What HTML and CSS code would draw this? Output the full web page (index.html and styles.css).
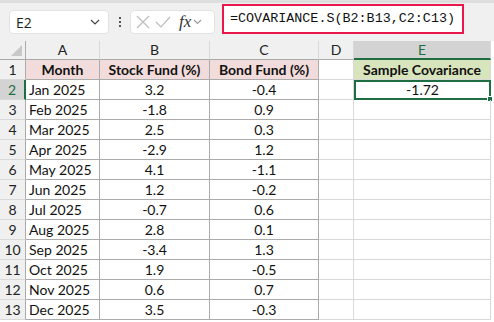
FILE: index.html
```html
<!DOCTYPE html>
<html lang="en">
<head>
  <meta charset="UTF-8">
  <title>Sample Covariance</title>
  <link rel="stylesheet" href="styles.css">
</head>
<body>
<!-- Formula bar -->
<div class="toolbar">
  <div class="namebox">
    <span>E2</span>
    <svg width="10" height="6" viewBox="0 0 10 6"><path d="M1 1l4 4 4-4" fill="none" stroke="#444" stroke-width="1.2"/></svg>
  </div>
  <div class="dots"><i></i><i></i><i></i></div>
  <div class="fxbox">
    <svg width="14" height="14" viewBox="0 0 14 14"><path d="M1 1l12 12M13 1L1 13" stroke="#bdbdbd" stroke-width="1.2"/></svg>
    <svg width="16" height="14" viewBox="0 0 16 14"><path d="M1 7l5 5L15 2" fill="none" stroke="#bdbdbd" stroke-width="1.2"/></svg>
    <span class="fx">fx</span>
    <svg width="9" height="6" viewBox="0 0 9 6"><path d="M1 1l3.5 3.5L8 1" fill="none" stroke="#999" stroke-width="1.1"/></svg>
  </div>
  <div class="formula">=COVARIANCE.S(B2:B13,C2:C13)</div>
</div>

<!-- Sheet -->
<div class="sheet">
  <div class="hd corner"><span class="tri"></span></div>
  <div class="hd">A</div>
  <div class="hd">B</div>
  <div class="hd">C</div>
  <div class="hd">D</div>
  <div class="hd sel-col">E</div>

  <div class="rh">1</div>
  <div class="c t head">Month</div>
  <div class="c t head">Stock Fund (%)</div>
  <div class="c t head">Bond Fund (%)</div>
  <div class="c"></div>
  <div class="c green">Sample Covariance</div>

  <div class="rh sel-row">2</div>
  <div class="c t l">Jan 2025</div>
  <div class="c t">3.2</div>
  <div class="c t">-0.4</div>
  <div class="c"></div>
  <div class="c active">-1.72<span class="handle"></span></div>

  <div class="rh">3</div><div class="c t l">Feb 2025</div><div class="c t">-1.8</div><div class="c t">0.9</div><div class="c"></div><div class="c"></div>
  <div class="rh">4</div><div class="c t l">Mar 2025</div><div class="c t">2.5</div><div class="c t">0.3</div><div class="c"></div><div class="c"></div>
  <div class="rh">5</div><div class="c t l">Apr 2025</div><div class="c t">-2.9</div><div class="c t">1.2</div><div class="c"></div><div class="c"></div>
  <div class="rh">6</div><div class="c t l">May 2025</div><div class="c t">4.1</div><div class="c t">-1.1</div><div class="c"></div><div class="c"></div>
  <div class="rh">7</div><div class="c t l">Jun 2025</div><div class="c t">1.2</div><div class="c t">-0.2</div><div class="c"></div><div class="c"></div>
  <div class="rh">8</div><div class="c t l">Jul 2025</div><div class="c t">-0.7</div><div class="c t">0.6</div><div class="c"></div><div class="c"></div>
  <div class="rh">9</div><div class="c t l">Aug 2025</div><div class="c t">2.8</div><div class="c t">0.1</div><div class="c"></div><div class="c"></div>
  <div class="rh">10</div><div class="c t l">Sep 2025</div><div class="c t">-3.4</div><div class="c t">1.3</div><div class="c"></div><div class="c"></div>
  <div class="rh">11</div><div class="c t l">Oct 2025</div><div class="c t">1.9</div><div class="c t">-0.5</div><div class="c"></div><div class="c"></div>
  <div class="rh">12</div><div class="c t l">Nov 2025</div><div class="c t">0.6</div><div class="c t">0.7</div><div class="c"></div><div class="c"></div>
  <div class="rh">13</div><div class="c t l">Dec 2025</div><div class="c t">3.5</div><div class="c t">-0.3</div><div class="c"></div><div class="c"></div>
</div>
</body>
</html>
```
FILE: styles.css
```css
:root {
  --bar: #f0f0f0;
  --grid: #d9d9d9;
  --line: #ababab;
  --green: #1f6e43;
}

* {
  margin: 0;
  padding: 0;
  box-sizing: border-box;
}

body {
  width: 494px;
  height: 322px;
  overflow: hidden;
  background: white;
  font-family: Lato, 'Liberation Sans', sans-serif;
  color: #111;
}

/* Formula bar */
.toolbar {
  height: 41px;
  background: var(--bar);
  border-top: 3px solid #dedede;
  display: flex;
  align-items: center;
  padding-left: 9px;
}

.namebox {
  width: 100px;
  height: 24px;
  background: white;
  border: 1px solid #e2e2e2;
  border-radius: 4px;
  display: flex;
  align-items: center;
  justify-content: space-between;
  padding: 0 8px 0 6px;
  font-family: 'Open Sans', sans-serif;
  font-size: 14px;
  color: #222;
}

.dots {
  width: 21px;
  display: flex;
  flex-direction: column;
  align-items: center;
  gap: 2px;
}

.dots i {
  width: 2px;
  height: 2px;
  background: #555;
}

.fxbox {
  width: 85px;
  height: 24px;
  background: white;
  border: 1px solid #e2e2e2;
  border-radius: 4px;
  display: flex;
  align-items: center;
  gap: 5px;
  padding-left: 5px;
}

.fx {
  font-family: 'Liberation Serif', serif;
  font-style: italic;
  font-size: 17px;
  color: #333;
  margin-left: 3px;
  margin-right: -3px;
}

.formula {
  margin-left: 7px;
  width: 242px;
  height: 30px;
  margin-top: -6px;
  background: white;
  border: 2px solid #e8184d;
  font-family: 'Liberation Mono', monospace;
  font-size: 13.4px;
  line-height: 26px;
  padding-left: 6px;
  color: #111;
}

/* Grid */
.sheet {
  display: grid;
  grid-template-columns: 26px 74px 110px 109px 35px 137px;
  grid-template-rows: 19px repeat(13, 20px);
  font-size: 14px;
}

.hd {
  background: var(--bar);
  border-right: 1px solid var(--grid);
  border-bottom: 1px solid var(--line);
  text-align: center;
  line-height: 18px;
  color: #222;
}

.corner {
  position: relative;
  border-right-color: var(--line);
}

.tri {
  position: absolute;
  right: 3px;
  bottom: 3px;
  width: 0;
  height: 0;
  border-left: 11px solid transparent;
  border-bottom: 11px solid #c8c8c8;
}

.sel-col {
  background: #d3d3d3;
  color: var(--green);
  border-bottom: 2px solid var(--green);
}

.rh {
  background: var(--bar);
  border-right: 1px solid var(--line);
  border-bottom: 1px solid var(--grid);
  text-align: center;
  line-height: 20px;
  color: #222;
}

.sel-row {
  background: #d3d3d3;
  color: var(--green);
  border-right: 2px solid var(--green);
}

.c {
  border-right: 1px solid var(--grid);
  border-bottom: 1px solid var(--grid);
  line-height: 20px;
  text-align: center;
  white-space: nowrap;
  position: relative;
}

.c.t {
  border-right-color: var(--line);
  border-bottom-color: var(--line);
}

.c.l {
  text-align: left;
  padding-left: 3px;
}

.head {
  background: #f2dcdb;
  font-weight: bold;
}

.green {
  background: #d8e4bc;
  font-weight: bold;
}

.active {
  border: 2px solid var(--green);
  line-height: 16px;
}

.handle {
  position: absolute;
  right: -4px;
  bottom: -4px;
  width: 6px;
  height: 6px;
  background: var(--green);
  border: 1px solid white;
}
```
